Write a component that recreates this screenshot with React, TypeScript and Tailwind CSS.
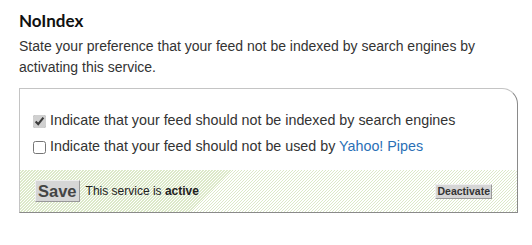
import React from 'react';

export default function App() {
  return (
    <div className="w-[532px] h-[245px] bg-white px-[19px] pt-[10px] font-['Liberation_Sans',Arial,sans-serif] text-[#222]">
      <h2 className="font-['Lato',sans-serif] text-[17px] font-bold leading-[22px] text-[#111]">NoIndex</h2>
      <p className="mt-[4px] text-[14px] leading-[21px] text-[#333]">
        State your preference that your feed not be indexed by search engines by activating this service.
      </p>

      <div className="mt-[10px] w-[499px] rounded-tr-[16px] border border-t-[#c4c4c4] border-l-[#c4c4c4] border-r-[#8a8a8a] border-b-[#8a8a8a] overflow-hidden">
        <div className="pt-[19px] pb-[10px] pl-[13px] text-[14.3px] text-[#333]">
          <label className="flex h-[26px] items-center gap-[3px]">
            <input type="checkbox" defaultChecked className="m-0 h-[13px] w-[13px] accent-[#d0d0d0]" />
            <span className="ml-[1px]">Indicate that your feed should not be indexed by search engines</span>
          </label>
          <label className="flex h-[26px] items-center gap-[3px]">
            <input type="checkbox" className="m-0 h-[13px] w-[13px]" />
            <span className="ml-[1px]">
              Indicate that your feed should not be used by <a className="text-[#2a6fb6]">Yahoo! Pipes</a>
            </span>
          </label>
        </div>

        <div className="flex h-[42px] items-center bg-[repeating-linear-gradient(135deg,#dce9c9_0px,#dce9c9_0.8px,#ffffff_0.8px,#ffffff_2.12px)] pl-[15px] pr-[25px]">
          <button className="h-[22px] border border-t-[#eee] border-l-[#eee] border-r-[#999] border-b-[#999] bg-[#d6d6d6] px-[2px] text-[16.5px] font-bold leading-[18px] text-[#444]">
            Save
          </button>
          <span className="ml-[6px] text-[12px] text-[#222]">
            This service is <b>active</b>
          </span>
          <button className="ml-auto h-[15px] border border-t-[#eee] border-l-[#eee] border-r-[#999] border-b-[#999] bg-[#d6d6d6] px-[1px] text-[10.5px] font-bold leading-[12px] text-[#333]">
            Deactivate
          </button>
        </div>
      </div>
    </div>
  );
}
